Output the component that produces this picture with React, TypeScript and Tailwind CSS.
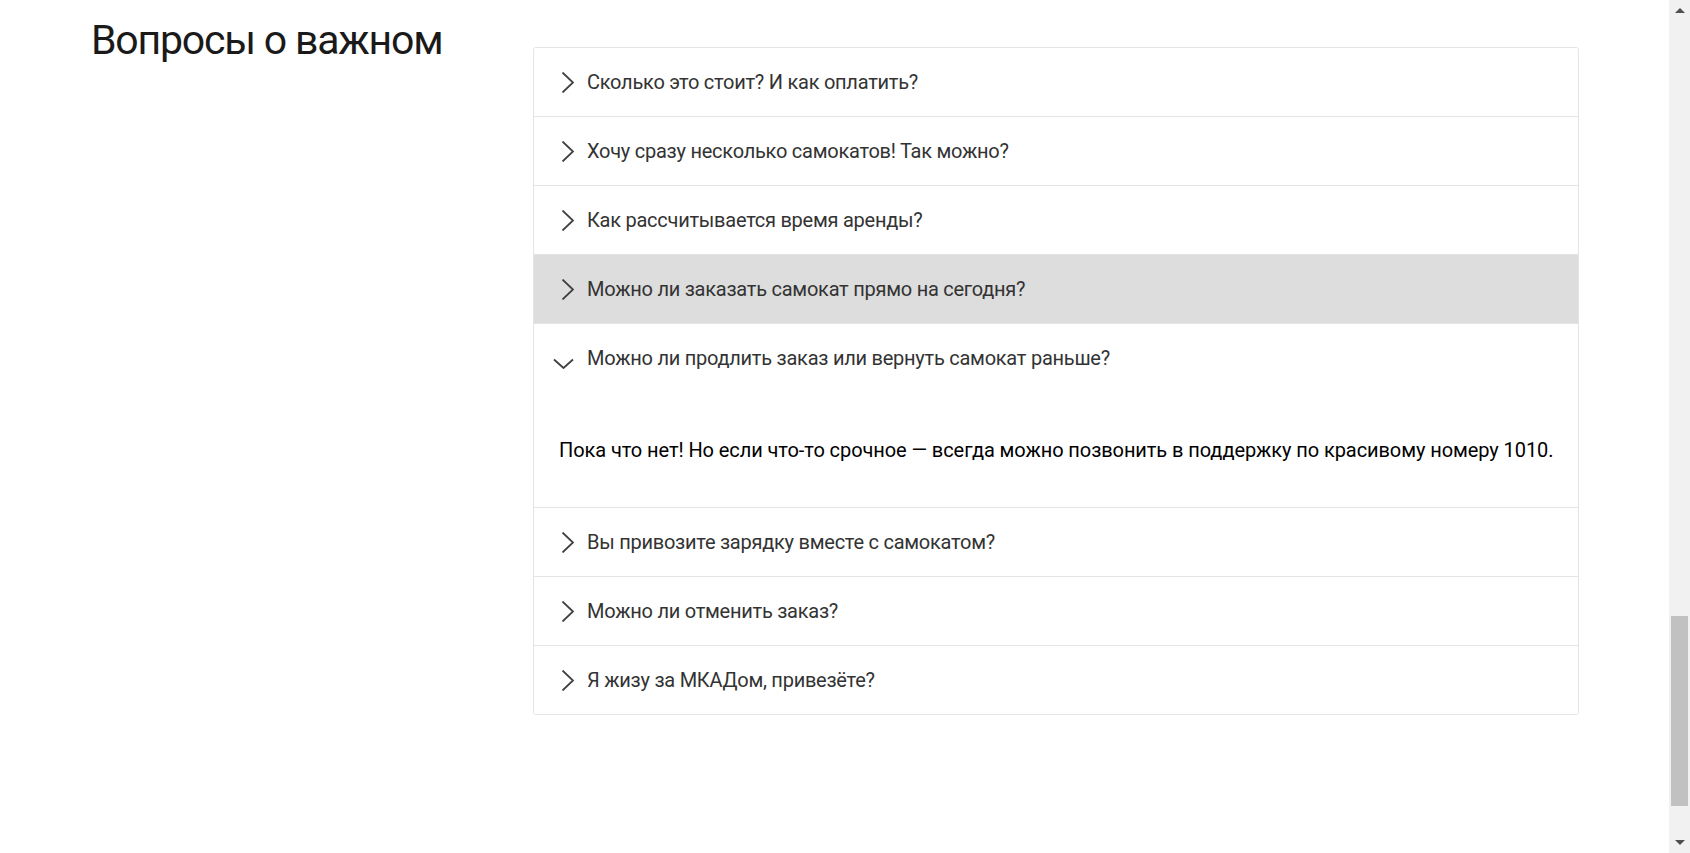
import { useState } from "react";

const questions = [
  "Сколько это стоит? И как оплатить?",
  "Хочу сразу несколько самокатов! Так можно?",
  "Как рассчитывается время аренды?",
  "Можно ли заказать самокат прямо на сегодня?",
  "Можно ли продлить заказ или вернуть самокат раньше?",
  "Вы привозите зарядку вместе с самокатом?",
  "Можно ли отменить заказ?",
  "Я жизу за МКАДом, привезёте?",
];

const answers: Record<number, string> = {
  4: "Пока что нет! Но если что-то срочное — всегда можно позвонить в поддержку по красивому номеру 1010.",
};

function Chevron({ open }: { open: boolean }) {
  return (
    <svg width="21" height="21" viewBox="0 0 21 21" className="shrink-0" fill="none">
      {open ? (
        <polyline points="1,11.5 10.5,20 20,11.5" stroke="#404040" strokeWidth="1.8" />
      ) : (
        <polyline points="9.5,0.5 20,10.5 9.5,20.5" stroke="#404040" strokeWidth="1.8" />
      )}
    </svg>
  );
}

function Scrollbar() {
  return (
    <div className="w-[21px] h-full bg-[#f1f1f1] flex flex-col items-center shrink-0">
      <div className="h-[21px] w-full flex items-center justify-center">
        <div className="w-0 h-0 border-l-[5px] border-r-[5px] border-b-[5px] border-l-transparent border-r-transparent border-b-[#505050]" />
      </div>
      <div className="flex-1" />
      <div className="w-[17px] h-[190px] bg-[#c1c1c1]" />
      <div className="h-[26px]" />
      <div className="h-[21px] w-full flex items-center justify-center">
        <div className="w-0 h-0 border-l-[5px] border-r-[5px] border-t-[5px] border-l-transparent border-r-transparent border-t-[#505050]" />
      </div>
    </div>
  );
}

export default function App() {
  const [open, setOpen] = useState<number | null>(4);
  const hovered = 3;

  return (
    <div className="h-screen w-full flex bg-white overflow-hidden" style={{ fontFamily: "Roboto, 'Liberation Sans', sans-serif" }}>
      <div className="flex-1 flex items-start pl-[91px] pr-[90px] pt-[20px]">
        <h2 className="w-[442px] shrink-0 text-[41px] leading-none tracking-[-1.2px] text-[#1a1a1a] font-normal">
          Вопросы о важном
        </h2>
        <div className="flex-1 mt-[27px] border border-[#e4e4e4] rounded-[3px] overflow-hidden">
          {questions.map((q, i) => (
            <div key={q} className={i > 0 ? "border-t border-[#e4e4e4]" : ""}>
              <button
                onClick={() => setOpen(open === i ? null : i)}
                className={`w-full h-[68px] flex items-center gap-[13px] pl-[19px] text-left cursor-pointer ${
                  i === hovered ? "bg-[#dddddd]" : "bg-white"
                }`}
              >
                <Chevron open={open === i} />
                <span className="text-[20px] tracking-[-0.25px] text-[#333333]">{q}</span>
              </button>
              {open === i && answers[i] && (
                <p className="px-[25px] pt-[46px] pb-[45px] text-[20px] leading-[24px] tracking-[-0.08px] whitespace-nowrap text-black">
                  {answers[i]}
                </p>
              )}
            </div>
          ))}
        </div>
      </div>
      <Scrollbar />
    </div>
  );
}
